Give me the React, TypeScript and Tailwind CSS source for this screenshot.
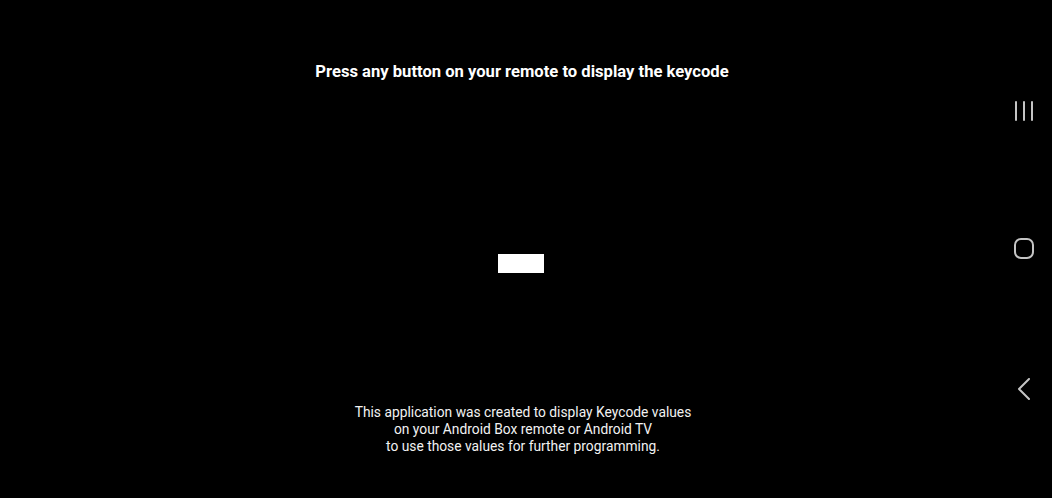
import React from 'react';

const NavBar = () => (
  <div className="absolute right-0 top-0 h-full w-[60px] flex flex-col items-center pt-[101px] text-[#c4c4c4]">
    {/* recents */}
    <svg width="20" height="20" viewBox="0 0 20 20" className="ml-[4px]">
      <rect x="1" y="0" width="2" height="20" rx="1" fill="currentColor" />
      <rect x="9" y="0" width="2" height="20" rx="1" fill="currentColor" />
      <rect x="17" y="0" width="2" height="20" rx="1" fill="currentColor" />
    </svg>
    {/* home */}
    <svg width="20" height="21" viewBox="0 0 20 21" className="mt-[117px] ml-[4px]">
      <rect x="1" y="1" width="18" height="19" rx="6" fill="none" stroke="currentColor" strokeWidth="2" />
    </svg>
    {/* back */}
    <svg width="14" height="22" viewBox="0 0 14 22" className="mt-[119px] ml-[4px]">
      <path d="M12 1 L2 11 L12 21" fill="none" stroke="currentColor" strokeWidth="2" strokeLinecap="round" strokeLinejoin="round" />
    </svg>
  </div>
);

export default function App() {
  return (
    <div
      className="relative w-full h-[498px] bg-black overflow-hidden text-white"
      style={{ fontFamily: 'Roboto, "Noto Sans", sans-serif' }}
    >
      <div className="flex flex-col items-center pr-[10px] pt-[61px]">
        <h1 className="ml-[2px] text-[16.6px] font-bold leading-[22px]">
          Press any button on your remote to display the keycode
        </h1>
        <div className="mt-[171px] w-[46px] h-[19px] bg-white" />
        <p className="ml-[4px] mt-[131px] text-[13.8px] leading-[17px] text-center text-[#f2f2f2]">
          This application was created to display Keycode values
          <br />
          on your Android Box remote or Android TV
          <br />
          to use those values for further programming.
        </p>
      </div>
      <NavBar />
    </div>
  );
}
